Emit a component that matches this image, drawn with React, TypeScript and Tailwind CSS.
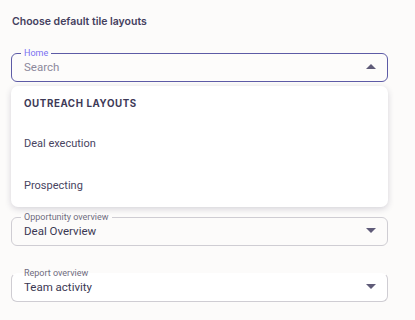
const Caret = ({ up }: { up?: boolean }) => (
  <svg width="10" height="5" viewBox="0 0 10 5" className="shrink-0">
    <polygon points={up ? "0,5 10,5 5,0" : "0,0 10,0 5,5"} fill="#5f5b78" />
  </svg>
)

const Field = ({
  label,
  value,
  placeholder,
  open,
  className,
  legendClass,
}: {
  label: string
  value?: string
  placeholder?: string
  open?: boolean
  className: string
  legendClass: string
}) => (
  <fieldset className={"rounded-[6px] border " + className}>
    <legend className={"ml-[9px] px-[3px] text-[9px] leading-[10px] " + legendClass}>{label}</legend>
    <div className="flex h-[23px] items-center justify-between pl-[12px] pr-[11px] pb-[6px]">
      <span
        className={
          "text-[11.5px] leading-[16px] " + (placeholder ? "text-[#8c899c]" : "text-[#3b3853]")
        }
      >
        {value ?? placeholder}
      </span>
      <Caret up={open} />
    </div>
  </fieldset>
)

const App = () => {
  return (
    <div
      className="min-h-[320px] w-[415px] bg-[#fcfbfa] pt-[14px] pl-[11px] pr-[27px]"
      style={{ fontFamily: "Roboto, 'Noto Sans', sans-serif" }}
    >
      <h2
        className="ml-[1px] text-[10.5px] leading-[16px] font-semibold text-[#44405e]"
        style={{ fontFamily: "Inter, sans-serif" }}
      >
        Choose default tile layouts
      </h2>

      <div className="mt-[18px]">
        <Field
          label="Home"
          placeholder="Search"
          open
          className="border-[#5d5ba6] bg-[#fdfcfb]"
          legendClass="text-[#7a70f2]"
        />
      </div>

      <div className="mt-[4px] rounded-[7px] bg-white shadow-[0_2px_6px_rgba(40,35,70,0.18)]">
        <div
          className="pt-[8px] pl-[13px] text-[9.75px] leading-[20px] font-bold tracking-[0.06em] text-[#3e3a57]"
          style={{ fontFamily: "Inter, sans-serif" }}
        >
          OUTREACH LAYOUTS
        </div>
        <div className="mt-[9px]">
          <div className="flex h-[42px] items-center pl-[13px] text-[11px] text-[#48445f]">Deal execution</div>
          <div className="flex h-[42px] items-center pl-[13px] text-[11px] text-[#48445f]">Prospecting</div>
        </div>
      </div>

      <div className="mt-[5px]">
        <Field
          label="Opportunity overview"
          value="Deal Overview"
          className="border-[#cfcdd3]"
          legendClass="text-[#6f6c80]"
        />
      </div>

      <div className="mt-[22px]">
        <Field
          label="Report overview"
          value="Team activity"
          className="border-[#cfcdd3] border-t-transparent bg-white"
          legendClass="text-[#6f6c80]"
        />
      </div>
    </div>
  )
}

export default App
